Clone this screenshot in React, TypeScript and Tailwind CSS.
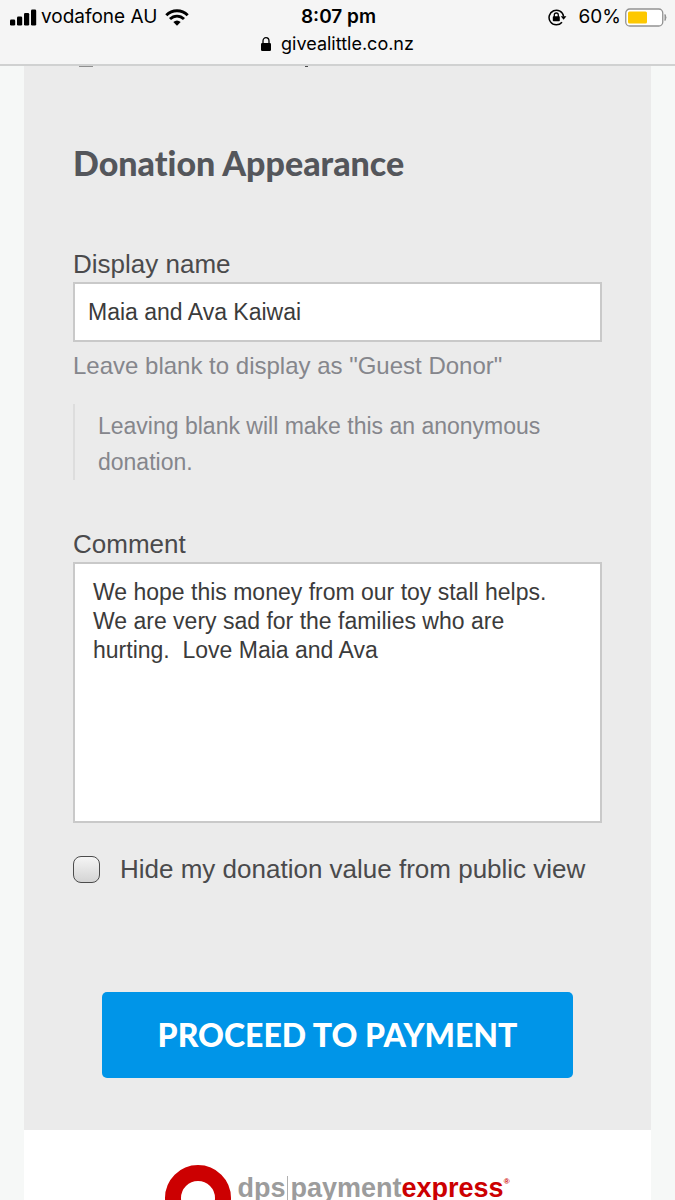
import React, { useState } from 'react';

const SignalIcon: React.FC = () => (
  <svg width="27" height="17" viewBox="0 0 27 17" fill="black" aria-hidden="true">
    <rect x="0" y="10.500" width="5.200" height="6" rx="1.300" />
    <rect x="7" y="7.500" width="5.200" height="9" rx="1.300" />
    <rect x="14" y="4" width="5.200" height="12.500" rx="1.300" />
    <rect x="21" y="0.500" width="5.200" height="16" rx="1.300" />
  </svg>
);

const WifiIcon: React.FC = () => (
  <svg width="24" height="17" viewBox="0 0 24 17" aria-hidden="true">
    <g fill="none" stroke="black" strokeWidth="2.900">
      <path d="M1.300 6.200C7.300 0.200 16.700 0.200 22.700 6.200" />
      <path d="M5 10C9 6.100 15 6.100 19 10" />
    </g>
    <path d="M8.300 13Q12 10 15.700 13L12 16.800Z" fill="black" />
  </svg>
);

const LockIcon: React.FC = () => (
  <svg width="10" height="14" viewBox="0 0 10 14" aria-hidden="true">
    <rect x="0" y="6" width="10" height="8" rx="1.200" fill="black" />
    <path d="M2 7V4a3 3.300 0 0 1 6 0v3" fill="none" stroke="black" strokeWidth="1.300" />
  </svg>
);

const RotationLockIcon: React.FC = () => (
  <svg width="19" height="17" viewBox="0 0 19 17" aria-hidden="true">
    <path d="M14 13.200A7.300 7.300 0 1 1 15.600 7.500" fill="none" stroke="black" strokeWidth="1.500" />
    <path d="M12.800 7.200H18.400L15.600 10.800Z" fill="black" />
    <rect x="4.800" y="7.300" width="7" height="5" rx="0.800" fill="black" />
    <path d="M6.300 8V6a2 2 0 0 1 4 0v2" fill="none" stroke="black" strokeWidth="1.300" />
  </svg>
);

const BatteryIcon: React.FC = () => (
  <svg width="42" height="19" viewBox="0 0 42 19" aria-hidden="true">
    <rect x="0.750" y="1" width="37" height="17" rx="4" fill="white" stroke="#929292" strokeWidth="1.300" />
    <rect x="3" y="3.500" width="19" height="12" rx="1.500" fill="#fdc800" />
    <path d="M40 6.500Q42 9.500 40 12.500Z" fill="#929292" stroke="#929292" />
  </svg>
);

const BrowserBar: React.FC = () => (
  <header className="border-b-2 border-[#d0d1d1] bg-[#f5f5f5] pb-[10px] font-['Inter',sans-serif] text-black">
    <div className="grid h-[34px] grid-cols-[1fr_auto_1fr] items-center pl-[10px] pr-2 text-[19px] leading-6">
      <div className="flex items-center gap-1">
        <SignalIcon />
        <span>vodafone AU</span>
        <span className="pl-1">
          <WifiIcon />
        </span>
      </div>
      <span className="px-2 font-semibold">8:07 pm</span>
      <div className="flex items-center justify-end gap-1">
        <span className="pr-2">
          <RotationLockIcon />
        </span>
        <span>60%</span>
        <BatteryIcon />
      </div>
    </div>
    <div className="flex h-5 items-center justify-center gap-[10px] text-[18px] leading-5">
      <LockIcon />
      <span>givealittle.co.nz</span>
    </div>
  </header>
);

const PaymentLogo: React.FC = () => (
  <div className="flex items-start justify-center gap-[6px] pt-[35px]">
    <div className="size-[66px] shrink-0 rounded-full border-16 border-[#cc0001]" />
    <div className="flex items-start pt-[7px] font-['Liberation_Sans',sans-serif] text-[27px] leading-8 font-bold text-[#9c9c9c]">
      <span>dps</span>
      <span className="mx-[2px] mt-1 h-8 w-px bg-[#b0b0b0]" />
      <span>payment</span>
      <span className="text-[#cc0001]">express</span>
      <span className="pt-1 text-[8px] leading-3 text-[#cc0001]">®</span>
    </div>
  </div>
);

export default function App() {
  const [displayName, setDisplayName] = useState('Maia and Ava Kaiwai');
  const [comment, setComment] = useState(
    'We hope this money from our toy stall helps. We are very sad for the families who are hurting.  Love Maia and Ava'
  );
  const [hideValue, setHideValue] = useState(false);

  return (
    <div className="min-h-screen bg-[#f6f8f7] font-['Liberation_Sans',sans-serif] text-[#4a4a4c]">
      <BrowserBar />
      <main className="mx-6 bg-[#ebebeb] px-[49px] pb-[52px]">
        {/* bottom edge of the row scrolled under the browser bar */}
        <div className="flex h-px pl-[6px]" aria-hidden="true">
          <div className="w-[14px] bg-[#8f8f8f]" />
          <div className="ml-[212px] w-[3px] bg-[#4a4a4c]" />
        </div>
        <form onSubmit={(e) => e.preventDefault()}>
          <h2 className="pt-[76px] font-['Lato',sans-serif] text-[34px] leading-10 font-black text-[#54565b] [font-variant-ligatures:none]">
            Donation Appearance
          </h2>

          <label htmlFor="display-name" className="mt-[65px] block text-[26px] leading-8">
            Display name
          </label>
          <input
            id="display-name"
            type="text"
            value={displayName}
            onChange={(e) => setDisplayName(e.target.value)}
            className="mt-[2px] block h-[60px] w-full border-2 border-[#c9c9c9] bg-white px-[13px] text-[23px] text-[#3b3b3b]"
          />
          <p className="mt-[6px] text-[24px] leading-9 text-[#85868c]">
            Leave blank to display as "Guest Donor"
          </p>
          <blockquote className="mt-5 border-l-2 border-[#dddddd] pt-1 pl-[23px] text-[23px] leading-9 text-[#85868c]">
            Leaving blank will make this an anonymous donation.
          </blockquote>

          <label htmlFor="comment" className="mt-12 block text-[26px] leading-8">
            Comment
          </label>
          <textarea
            id="comment"
            value={comment}
            onChange={(e) => setComment(e.target.value)}
            className="mt-[2px] block h-[261px] w-full resize-none border-2 border-[#c9c9c9] bg-white px-[18px] py-[14px] text-[23px] leading-[29px] text-[#3b3b3b]"
          />

          <div className="mt-[30px] flex items-center gap-5">
            <input
              id="hide-value"
              type="checkbox"
              checked={hideValue}
              onChange={(e) => setHideValue(e.target.checked)}
              className="size-[27px] shrink-0 appearance-none rounded-[8px] border border-[#4c4c4c] bg-linear-to-b from-[#f5f5f5] to-[#d4d4d4] checked:from-[#0095e8] checked:to-[#0095e8]"
            />
            <label htmlFor="hide-value" className="text-[26px] leading-8">
              Hide my donation value from public view
            </label>
          </div>

          <div className="mt-[107px] px-[29px]">
            <button
              type="submit"
              className="h-[86px] w-full rounded-[5px] bg-[#0095e8] font-['Lato',sans-serif] text-[32px] font-black text-white"
            >
              PROCEED TO PAYMENT
            </button>
          </div>
        </form>
      </main>
      <footer className="mx-6 h-[70px] overflow-hidden bg-white">
        <PaymentLogo />
      </footer>
    </div>
  );
}
